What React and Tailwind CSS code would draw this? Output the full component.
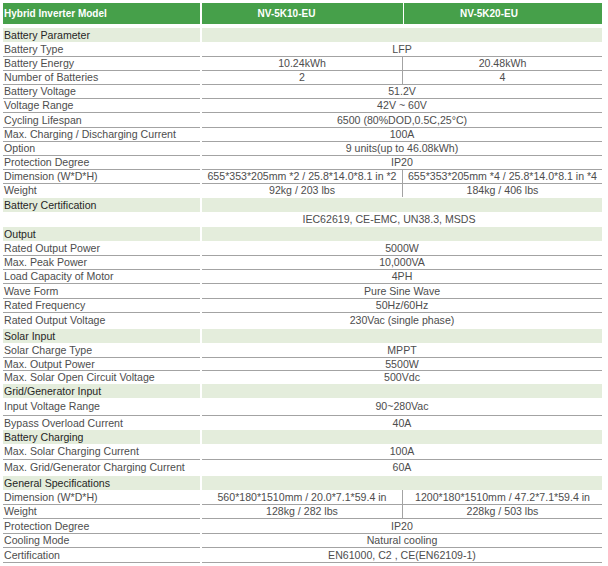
const sections = [
  {
    title: 'Battery Parameter',
    gap: 'mt-[4px]',
    rows: [
      { label: 'Battery Type', v: 'LFP' },
      { label: 'Battery Energy', a: '10.24kWh', b: '20.48kWh' },
      { label: 'Number of Batteries', a: '2', b: '4' },
      { label: 'Battery Voltage', v: '51.2V' },
      { label: 'Voltage Range', v: '42V ~ 60V' },
      { label: 'Cycling Lifespan', v: '6500 (80%DOD,0.5C,25°C)', h: 'h-[15px]' },
      { label: 'Max. Charging / Discharging Current', v: '100A' },
      { label: 'Option', v: '9 units(up to 46.08kWh)' },
      { label: 'Protection Degree', v: 'IP20' },
      { label: 'Dimension (W*D*H)', a: '655*353*205mm *2 / 25.8*14.0*8.1 in *2', b: '655*353*205mm *4 / 25.8*14.0*8.1 in *4' },
      { label: 'Weight', a: '92kg / 203 lbs', b: '184kg / 406 lbs' },
    ],
  },
  {
    title: 'Battery Certification',
    gap: 'mt-[1px]',
    rows: [{ label: '', v: 'IEC62619, CE-EMC, UN38.3, MSDS', h: 'h-[15px]', vc: 'pr-[26px]' }],
  },
  {
    title: 'Output',
    rows: [
      { label: 'Rated Output Power', v: '5000W' },
      { label: 'Max. Peak Power', v: '10,000VA' },
      { label: 'Load Capacity of Motor', v: '4PH' },
      { label: 'Wave Form', v: 'Pure Sine Wave', h: 'h-[15px]' },
      { label: 'Rated Frequency', v: '50Hz/60Hz' },
      { label: 'Rated Output Voltage', v: '230Vac (single phase)', h: 'h-[16px]' },
    ],
  },
  {
    title: 'Solar Input',
    gap: 'mt-[1px]',
    rows: [
      { label: 'Solar Charge Type', v: 'MPPT' },
      { label: 'Max. Output Power', v: '5500W', h: 'h-[13px]' },
      { label: 'Max. Solar Open Circuit Voltage', v: '500Vdc' },
    ],
  },
  {
    title: 'Grid/Generator Input',
    rows: [
      { label: 'Input Voltage Range', v: '90~280Vac', h: 'h-[17px]' },
      { label: 'Bypass Overload Current', v: '40A', h: 'h-[15px]' },
    ],
  },
  {
    title: 'Battery Charging',
    rows: [
      { label: 'Max. Solar Charging Current', v: '100A', h: 'h-[15px]' },
      { label: 'Max. Grid/Generator Charging Current', v: '60A', h: 'h-[16px]' },
    ],
  },
  {
    title: 'General Specifications',
    gap: 'mt-[1px]',
    rows: [
      { label: 'Dimension (W*D*H)', a: '560*180*1510mm / 20.0*7.1*59.4 in', b: '1200*180*1510mm / 47.2*7.1*59.4 in' },
      { label: 'Weight', a: '128kg / 282 lbs', b: '228kg / 503 lbs' },
      { label: 'Protection Degree', v: 'IP20', h: 'h-[15px]' },
      { label: 'Cooling Mode', v: 'Natural cooling' },
      { label: 'Certification', v: 'EN61000, C2 , CE(EN62109-1)', h: 'h-[16px]', last: true },
    ],
  },
];

function Row({ row, first }) {
  const line = first ? '' : 'border-t border-[#a3a3a3]';
  const bottom = row.last ? 'border-b border-[#a3a3a3]' : '';
  return (
    <div className={`flex ${row.h || 'h-[14px]'}`}>
      <div className={`w-[197px] flex items-center pl-[1px] text-[#4d4d4d] ${line} ${bottom}`}>
        {row.label}
      </div>
      <div className={`ml-[2px] w-[400px] flex text-[#4d4d4d] ${line} ${bottom}`}>
        {row.v !== undefined ? (
          <div className={`flex-1 flex items-center justify-center ${row.vc || ''}`}>{row.v}</div>
        ) : (
          <>
            <div className="w-[201px] flex items-center justify-center border-r border-[#a3a3a3]">{row.a}</div>
            <div className="flex-1 flex items-center justify-center">{row.b}</div>
          </>
        )}
      </div>
    </div>
  );
}

export default function App() {
  return (
    <div className="w-[608px] h-[566px] bg-white pt-[3px] pl-[3px] font-['Liberation_Sans',Arial,sans-serif] text-[10.6px] leading-none">
      {/* Header */}
      <div className="flex h-[21px] text-white font-bold text-[10px]">
        <div className="w-[197px] bg-[#46a04a] flex items-center pl-[1px]">Hybrid Inverter Model</div>
        <div className="ml-[2px] w-[201px] bg-[#46a04a] flex items-center justify-center pr-[32px]">NV-5K10-EU</div>
        <div className="ml-[1px] w-[198px] bg-[#46a04a] flex items-center justify-center pr-[28px]">NV-5K20-EU</div>
      </div>

      {sections.map((s) => (
        <div key={s.title} className={s.gap || ''}>
          <div className="flex h-[14px]">
            <div className="w-[197px] bg-[#e4eddc] flex items-center pl-[1px] text-[#262626]">{s.title}</div>
            <div className="ml-[2px] w-[400px] bg-[#e4eddc]" />
          </div>
          {s.rows.map((r, i) => (
            <Row key={i} row={r} first={i === 0} />
          ))}
        </div>
      ))}
    </div>
  );
}
